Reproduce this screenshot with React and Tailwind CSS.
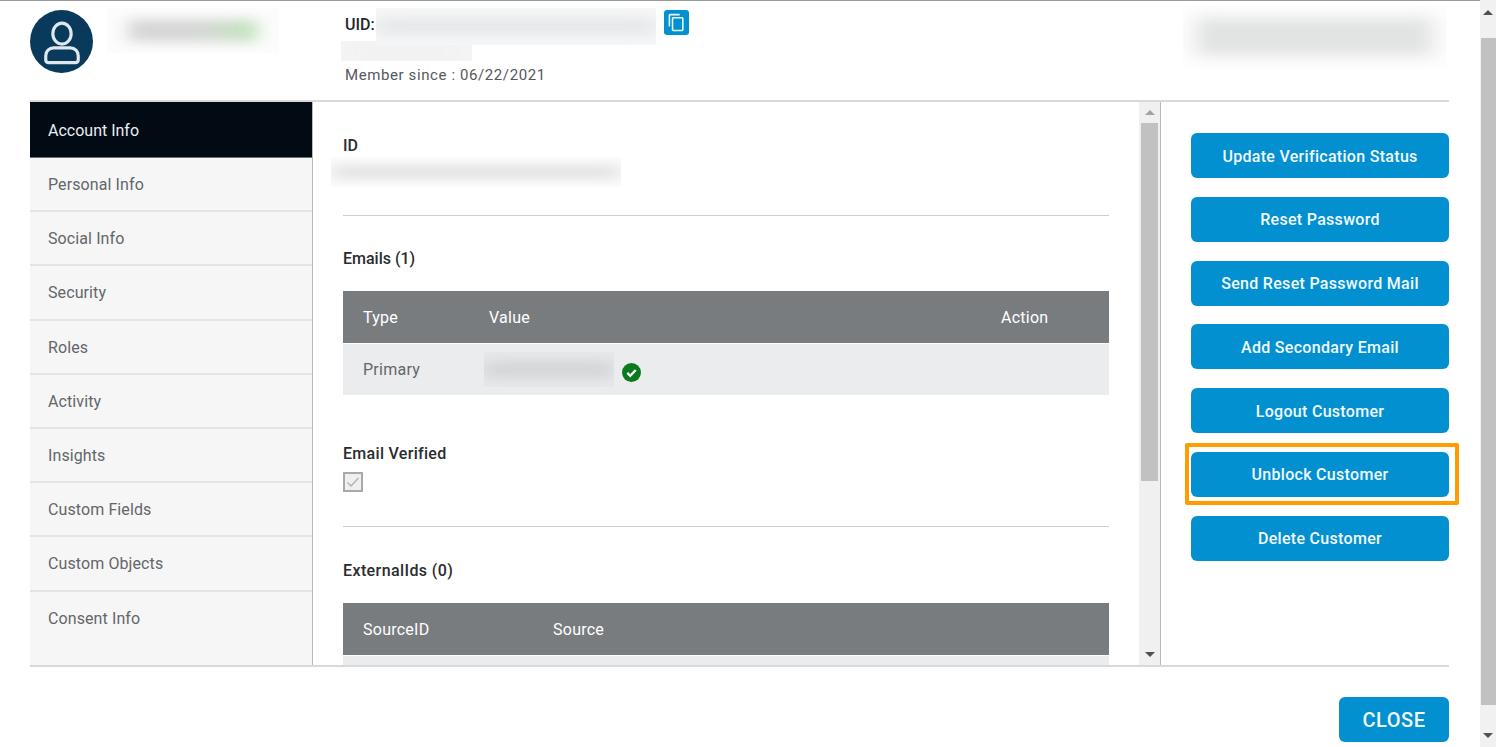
import React from 'react';

const NAV_ITEMS = ['Personal Info', 'Social Info', 'Security', 'Roles', 'Activity', 'Insights', 'Custom Fields', 'Custom Objects', 'Consent Info'];

const ACTIONS = ['Update Verification Status', 'Reset Password', 'Send Reset Password Mail', 'Add Secondary Email', 'Logout Customer', 'Unblock Customer', 'Delete Customer'];

const Blur = ({ className, inner }) => (
  <div className={`overflow-hidden ${className}`}>
    <div className={`h-full w-full blur-[11px] ${inner}`} />
  </div>
);

const Arrow = ({ up, color = 'border-[#505050]' }) => (
  <div
    className={`h-0 w-0 border-x-[5px] border-x-transparent ${color} ${up ? 'border-b-[5px]' : 'border-t-[5px]'}`}
  />
);

const UserIcon = () => (
  <svg viewBox="0 0 64 64" className="h-[63px] w-[63px]" fill="none" stroke="#dfe8ee" strokeWidth="3.2">
    <circle cx="32" cy="32" r="32" fill="#093a5b" stroke="none" />
    <ellipse cx="32.5" cy="24" rx="9.3" ry="10.6" />
    <path d="M24 38.5h17c4.6 0 8 3.6 8 8V51a3 3 0 0 1-3 2.5H19a3 3 0 0 1-3-2.5v-4.5c0-4.400 3.400-8 8-8z" />
  </svg>
);

const CopyIcon = () => (
  <svg viewBox="0 0 24 24" className="h-[19px] w-[19px]" fill="#e8f4fb">
    <path d="M16 1H4c-1.100 0-2 .9-2 2v14h2V3h12V1zm3 4H8c-1.100 0-2 .9-2 2v14c0 1.100.9 2 2 2h11c1.100 0 2-.9 2-2V7c0-1.100-.9-2-2-2zm0 16H8V7h11v14z" />
  </svg>
);

const VerifiedIcon = () => (
  <svg viewBox="0 0 18 18" className="h-[19px] w-[19px]">
    <circle cx="9" cy="9" r="9" fill="#0a7a1e" />
    <path d="M5 9.400l2.800 2.700L13 6.600" fill="none" stroke="#fff" strokeWidth="2.200" />
  </svg>
);

const TableHead = ({ children }) => (
  <div className="flex h-[52px] items-center bg-[#797c7f] pt-[2px] text-[16px] tracking-[0.25px] text-white">{children}</div>
);

const SectionTitle = ({ children, className }) => (
  <div className={`text-[16px] font-medium leading-[20px] text-[#2a2c30] ${className}`}>{children}</div>
);

export default function App() {
  return (
    <div
      className="relative flex h-[747px] w-[1496px] overflow-hidden bg-white"
      style={{ fontFamily: 'Roboto, "Liberation Sans", sans-serif' }}
    >
      <div className="flex w-[1480px] flex-col">
        <div className="h-px w-full bg-[#9a9a9a]" />

        <div className="ml-[30px] w-[1419px]">
          {/* header */}
          <div className="flex h-[101px] border-b-2 border-[#d9d9d9]">
            <div className="mt-[9px]"><UserIcon /></div>
            <Blur className="ml-[14px] mt-[7px] h-[45px] w-[172px] bg-[#fcfcfc]" inner="bg-gradient-to-r from-[#d6d6d6] via-[#d6d6d6] to-[#c4e4bf] scale-x-75 scale-y-50" />
            <div className="ml-[66px] w-[345px]">
              <div className="mt-[7px] flex h-[33px]">
                <span className="mt-[7px] text-[16px] font-medium leading-[20px] text-[#24262a]">UID:</span>
                <Blur className="relative z-10 ml-px h-[37px] w-[280px] bg-[#f5f7f8]" inner="bg-[#e6e8e9] scale-y-50" />
                <div className="ml-[8px] mt-[2px] flex h-[25px] w-[25px] items-center justify-center rounded-[3px] bg-[#0390d1]">
                  <CopyIcon />
                </div>
              </div>
              <Blur className="-ml-[4px] h-[20px] w-[131px] bg-[#f6f6f6]" inner="bg-[#f0f0f0]" />
              <div className="mt-[4px] text-[15px] leading-[20px] text-[#55585c] tracking-[0.6px]">Member since : 06/22/2021</div>
            </div>
            <Blur className="ml-[493px] mt-[4px] h-[63px] w-[263px] bg-[#fdfdfd]" inner="bg-[#e2e3e3] scale-x-90 scale-y-[0.6]" />
          </div>

          {/* body */}
          <div className="flex h-[565px] border-b-2 border-[#d9d9d9]">
            <div className="w-[282px] bg-[#f6f6f6]">
              <div className="flex h-[56px] items-center border-b border-[#6b7075] bg-[#020a13] pl-[18px] pt-[2px] text-[16px] text-[#e9eef2]">Account Info</div>
              {NAV_ITEMS.map((item) => (
                <div
                  key={item}
                  className="flex h-[54.2px] items-center border-b-2 border-[#e4e4e4] pl-[18px] pt-[2px] text-[16px] tracking-[0.1px] text-[#63666b] last:border-transparent"
                >
                  {item}
                </div>
              ))}
            </div>

            <div className="flex w-[849px] border-x border-[#b9b9b9]">
              <div className="w-[826px] overflow-hidden pl-[30px]">
                <div className="w-[766px]">
                  <SectionTitle className="mt-[34px]">ID</SectionTitle>
                  <Blur className="-ml-[12px] mt-[1px] h-[30px] w-[290px] bg-[#fdfdfd]" inner="bg-[#e2e2e2] scale-y-50" />
                  <div className="mt-[28px] h-px bg-[#cfcfcf]" />

                  <SectionTitle className="mt-[33px]">Emails (1)</SectionTitle>
                  <div className="mt-[22px]">
                    <TableHead>
                      <span className="w-[146px] pl-[20px]">Type</span>
                      <span className="w-[512px]">Value</span>
                      <span>Action</span>
                    </TableHead>
                    <div className="mt-px flex h-[51px] items-center bg-[#ebecee] text-[16px] tracking-[0.25px] text-[#63666b]">
                      <span className="w-[141px] pl-[20px]">Primary</span>
                      <Blur className="h-[35px] w-[130px] bg-[#e7e8ea]" inner="bg-[#d4d5d7] scale-y-50" />
                      <span className="ml-[8px] mt-[5px]"><VerifiedIcon /></span>
                    </div>
                  </div>

                  <SectionTitle className="mt-[49px] tracking-[0.3px]">Email Verified</SectionTitle>
                  <div className="mt-[8px] flex h-[20px] w-[20px] items-center justify-center border-2 border-[#a9a9a9] bg-[#efefef]">
                    <svg viewBox="0 0 16 16" className="h-[16px] w-[16px]" fill="none" stroke="#b0b0b0" strokeWidth="1.300">
                      <path d="M2.500 8.500l3.500 3.500 7.500-8" />
                    </svg>
                  </div>
                  <div className="mt-[34px] h-px bg-[#cfcfcf]" />

                  <SectionTitle className="mt-[34px] tracking-[0.4px]">ExternalIds (0)</SectionTitle>
                  <div className="mt-[22px]">
                    <TableHead>
                      <span className="w-[210px] pl-[20px]">SourceID</span>
                      <span>Source</span>
                    </TableHead>
                    <div className="mt-px h-[51px] bg-[#ebecee]" />
                  </div>
                </div>
              </div>

              <div className="flex w-[21px] flex-col items-center bg-[#f0f0f0]">
                <div className="flex h-[21px] items-center justify-center"><Arrow up color="border-b-[#a3a3a3]" /></div>
                <div className="h-[358px] w-[17px] bg-[#c1c1c1]" />
                <div className="flex-1" />
                <div className="flex h-[21px] items-center justify-center"><Arrow color="border-t-[#505050]" /></div>
              </div>
            </div>

            <div className="flex-1 pl-[30px]">
              <div className="mt-[31px] flex flex-col gap-[18.75px]">
                {ACTIONS.map((label) => (
                  <button
                    key={label}
                    className="h-[45px] w-full rounded-[6px] bg-[#0390d1] pt-[2px] text-[16px] font-medium tracking-[0.3px] text-[#f2f9fd]"
                  >
                    {label}
                  </button>
                ))}
              </div>
            </div>
          </div>

          {/* footer */}
          <div className="mt-[30px] flex justify-end">
            <button className="h-[45px] w-[110px] rounded-[6px] bg-[#0390d1] text-[20px] font-medium tracking-[0.5px] text-[#f2f9fd]">CLOSE</button>
          </div>
        </div>
      </div>

      {/* page scrollbar */}
      <div className="flex w-[16px] flex-col items-center bg-[#f1f1f1]">
        <div className="flex h-[38px] items-start justify-center pt-[10px]"><Arrow color="border-b-[#505050]" up /></div>
        <div className="h-[667px] w-[15px] bg-[#c1c1c1]" />
        <div className="flex flex-1 items-end justify-center pb-[9px]"><Arrow color="border-t-[#505050]" /></div>
      </div>

      {/* highlight round the Unblock button */}
      <div className="absolute left-[1185px] top-[443px] h-[62px] w-[274px] rounded-[2px] border-[4px] border-[#ff9c00]" />
    </div>
  );
}
